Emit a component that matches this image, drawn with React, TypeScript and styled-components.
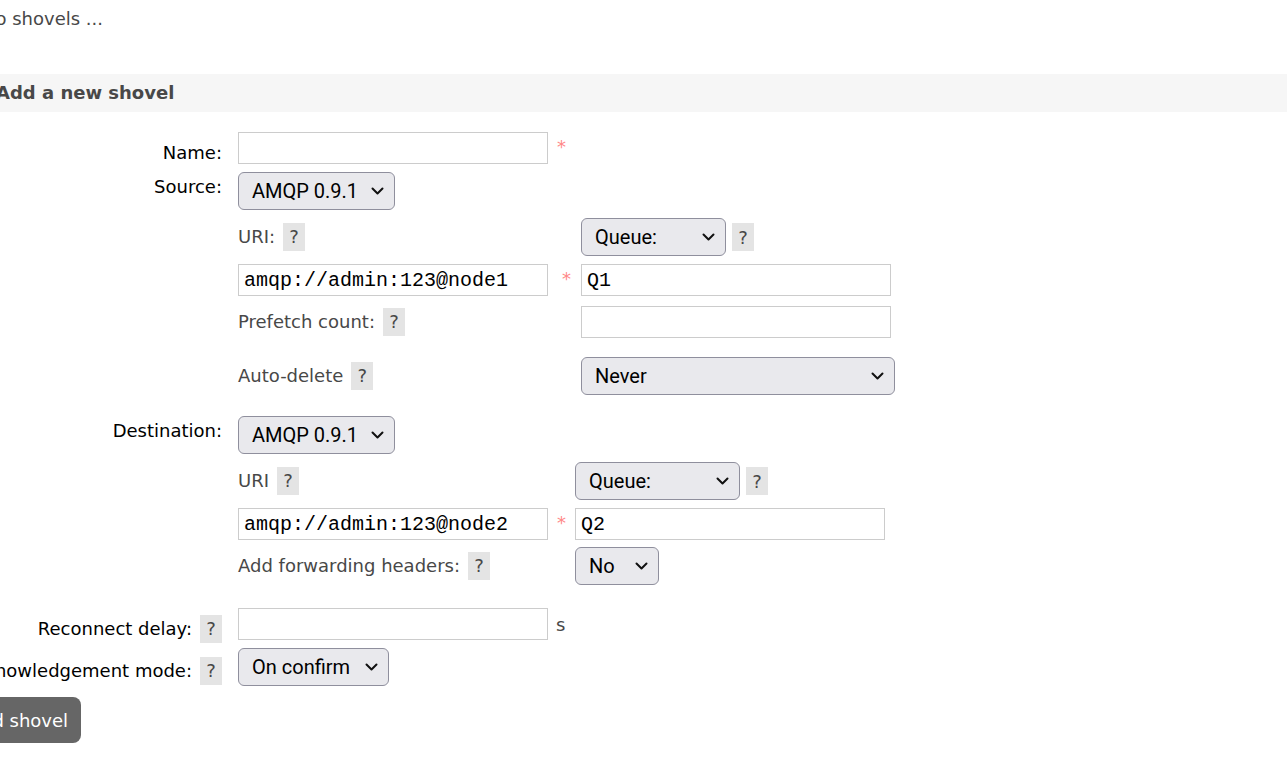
import React from "react";
import styled, { createGlobalStyle } from "styled-components";

const GlobalStyle = createGlobalStyle`
  body {
    margin: 0;
    overflow: hidden;
    background: #fff;
    font-family: "DejaVu Sans", Verdana, sans-serif;
    font-size: 18px;
    color: #484848;
  }
`;

const Chevron = () => (
  <svg width="13" height="8" viewBox="0 0 13 8">
    <polyline
      points="1.5,1.5 6.5,6.5 11.5,1.5"
      fill="none"
      stroke="#111"
      strokeWidth="2"
      strokeLinecap="round"
      strokeLinejoin="round"
    />
  </svg>
);

type SelectProps = { value: string; width: number };

const FakeSelect = ({ value, width }: SelectProps) => (
  <Select $w={width}>
    <span>{value}</span>
    <Chevron />
  </Select>
);

const App = () => {
  return (
    <>
      <GlobalStyle />
      <Page>
        <Note>No shovels ...</Note>
        <SectionTitle>Add a new shovel</SectionTitle>
        <Form>
          <FieldRow $mt={20}>
            <Label $pt={10}>Name:</Label>
            <Cell>
              <TextInput $w={310} />
              <Mand $ml={9} $top={4}>*</Mand>
            </Cell>
          </FieldRow>

          <FieldRow $mt={8}>
            <Label $pt={4}>Source:</Label>
            <Cell>
              <FakeSelect value="AMQP 0.9.1" width={157} />
            </Cell>
          </FieldRow>

          <FieldRow $mt={8}>
            <span />
            <Inner>
              <InnerRow $col={343}>
                <InnerLabel>
                  URI: <Help>?</Help>
                </InnerLabel>
                <Cell>
                  <FakeSelect value="Queue:" width={145} />
                  <Help>?</Help>
                </Cell>
              </InnerRow>
              <InnerRow $col={343} $mt={8}>
                <Cell>
                  <TextInput $w={310} defaultValue="amqp://admin:123@node1" />
                  <Mand $ml={14} $top={4}>*</Mand>
                </Cell>
                <TextInput $w={310} defaultValue="Q1" />
              </InnerRow>
              <InnerRow $col={343} $mt={10}>
                <InnerLabel>
                  Prefetch count: <Help>?</Help>
                </InnerLabel>
                <TextInput $w={310} />
              </InnerRow>
              <InnerRow $col={343} $mt={19}>
                <InnerLabel>
                  Auto-delete <Help>?</Help>
                </InnerLabel>
                <FakeSelect value="Never" width={314} />
              </InnerRow>
            </Inner>
          </FieldRow>

          <FieldRow $mt={21}>
            <Label $pt={4}>Destination:</Label>
            <Cell>
              <FakeSelect value="AMQP 0.9.1" width={157} />
            </Cell>
          </FieldRow>

          <FieldRow $mt={8}>
            <span />
            <Inner>
              <InnerRow $col={337}>
                <InnerLabel>
                  URI <Help>?</Help>
                </InnerLabel>
                <Cell>
                  <FakeSelect value="Queue:" width={165} />
                  <Help>?</Help>
                </Cell>
              </InnerRow>
              <InnerRow $col={337} $mt={8}>
                <Cell>
                  <TextInput $w={310} defaultValue="amqp://admin:123@node2" />
                  <Mand $ml={9} $top={4}>*</Mand>
                </Cell>
                <TextInput $w={310} defaultValue="Q2" />
              </InnerRow>
              <InnerRow $col={337} $mt={7}>
                <InnerLabel>
                  Add forwarding headers: <Help>?</Help>
                </InnerLabel>
                <FakeSelect value="No" width={84} />
              </InnerRow>
            </Inner>
          </FieldRow>

          <FieldRow $mt={23}>
            <Label $pt={7}>
              Reconnect delay: <Help>?</Help>
            </Label>
            <Cell>
              <TextInput $w={310} />
              <Unit>s</Unit>
            </Cell>
          </FieldRow>

          <FieldRow $mt={5}>
            <Label $pt={9}>
              Acknowledgement mode: <Help>?</Help>
            </Label>
            <Cell>
              <FakeSelect value="On confirm" width={151} />
            </Cell>
          </FieldRow>

          <SubmitButton>Add shovel</SubmitButton>
        </Form>
      </Page>
    </>
  );
};

export default App;

const Page = styled.div`
  margin-left: -44px;
  padding-top: 8px;
`;

const Note = styled.p`
  margin: 0 0 0 26px;
  line-height: 22px;
`;

const SectionTitle = styled.h2`
  margin: 44px 0 0;
  height: 38px;
  line-height: 38px;
  padding-left: 40px;
  background: #f6f6f6;
  font-size: 18px;
  font-weight: bold;
  color: #484848;
`;

const Form = styled.div`
  display: flex;
  flex-direction: column;
`;

const FieldRow = styled.div<{ $mt: number }>`
  display: grid;
  grid-template-columns: 266px auto;
  column-gap: 16px;
  align-items: start;
  margin-top: ${(p) => p.$mt}px;
`;

const Label = styled.div<{ $pt: number }>`
  display: flex;
  justify-content: flex-end;
  align-items: center;
  gap: 8px;
  padding-top: ${(p) => p.$pt}px;
  line-height: 22px;
  color: #000;
  white-space: nowrap;
`;

const Cell = styled.div`
  display: flex;
  align-items: center;
  gap: 6px;
`;

const Inner = styled.div`
  display: flex;
  flex-direction: column;
`;

const InnerRow = styled.div<{ $col: number; $mt?: number }>`
  display: grid;
  grid-template-columns: ${(p) => p.$col}px auto;
  align-items: center;
  margin-top: ${(p) => p.$mt ?? 0}px;
`;

const InnerLabel = styled.div`
  display: flex;
  align-items: center;
  gap: 8px;
  line-height: 22px;
  color: #484848;
  white-space: nowrap;
`;

const Help = styled.span`
  display: inline-flex;
  align-items: center;
  justify-content: center;
  width: 22px;
  height: 28px;
  background: #e4e4e4;
  color: #484848;
  font-size: 18px;
`;

const TextInput = styled.input<{ $w: number }>`
  box-sizing: border-box;
  width: ${(p) => p.$w}px;
  height: 32px;
  margin: 0;
  padding: 0 5px;
  border: 1px solid #ccc;
  border-radius: 0;
  background: #fff;
  font-family: "Liberation Mono", "Courier New", monospace;
  font-size: 20px;
  color: #000;
  outline: none;
`;

const Mand = styled.span<{ $ml: number; $top: number }>`
  align-self: flex-start;
  margin-left: ${(p) => p.$ml - 6}px;
  margin-top: ${(p) => p.$top}px;
  line-height: 22px;
  color: #f88;
  font-size: 18px;
`;

const Select = styled.div<{ $w: number }>`
  box-sizing: border-box;
  display: flex;
  align-items: center;
  justify-content: space-between;
  width: ${(p) => p.$w}px;
  height: 38px;
  padding: 0 10px 0 13px;
  border: 1px solid #8f8f9d;
  border-radius: 6px;
  background: #e9e9ed;
  font-family: Roboto, "Liberation Sans", sans-serif;
  font-size: 20px;
  color: #000;
`;

const Unit = styled.span`
  margin-left: 2px;
  color: #484848;
`;

const SubmitButton = styled.button`
  align-self: flex-start;
  margin-top: 11px;
  height: 46px;
  padding: 0 13px;
  border: none;
  border-radius: 8px;
  background: #666;
  color: #fff;
  font-family: "DejaVu Sans", Verdana, sans-serif;
  font-size: 18px;
`;
